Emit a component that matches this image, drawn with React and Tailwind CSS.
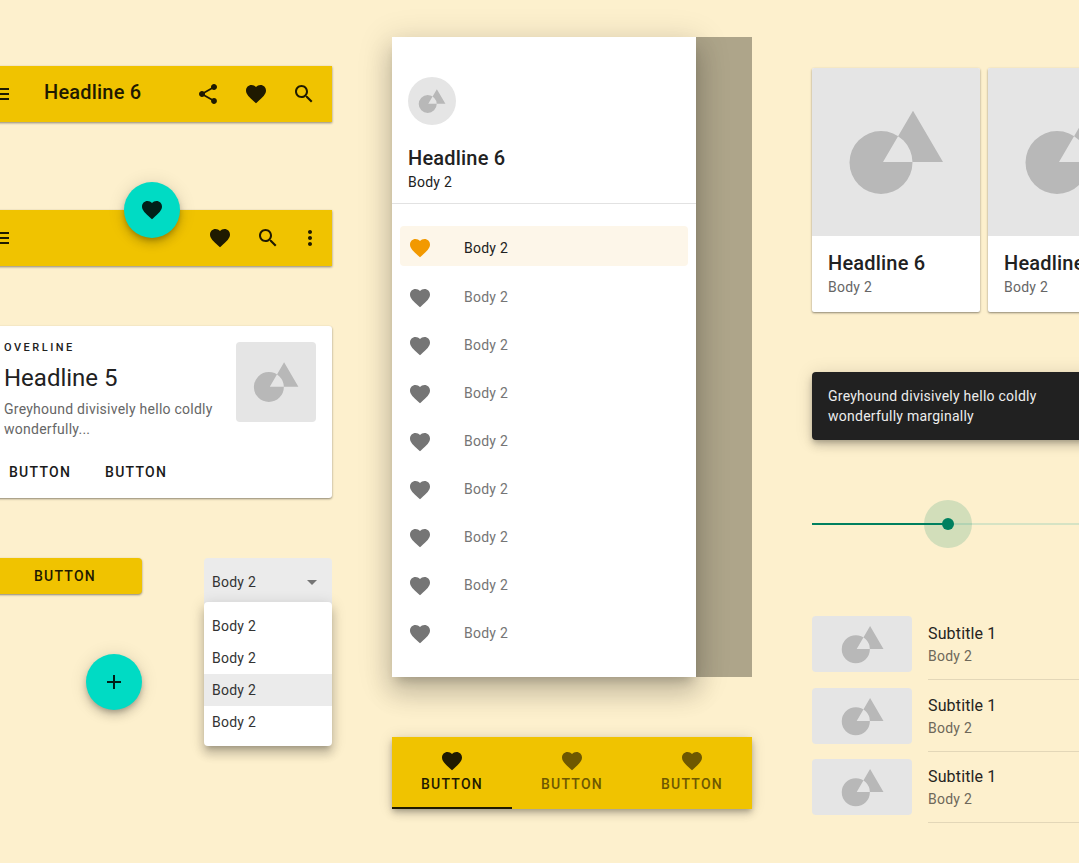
import React from 'react'

const paths = {
  heart: 'M12 21.35l-1.45-1.32C5.4 15.36 2 12.28 2 8.5 2 5.42 4.42 3 7.5 3c1.74 0 3.41.81 4.5 2.09C13.09 3.81 14.76 3 16.5 3 19.58 3 22 5.42 22 8.5c0 3.78-3.4 6.86-8.55 11.54L12 21.35z',
  share: 'M18 16.08c-.76 0-1.44.3-1.96.77L8.91 12.7c.05-.23.09-.46.09-.7s-.04-.47-.09-.7l7.05-4.11c.54.5 1.25.81 2.04.81 1.66 0 3-1.34 3-3s-1.34-3-3-3-3 1.34-3 3c0 .24.04.47.09.7L8.04 9.81C7.5 9.31 6.79 9 6 9c-1.66 0-3 1.34-3 3s1.34 3 3 3c.79 0 1.5-.31 2.04-.81l7.12 4.16c-.05.21-.08.43-.08.65 0 1.61 1.31 2.92 2.92 2.92 1.61 0 2.92-1.31 2.92-2.92s-1.31-2.92-2.92-2.92z',
  search: 'M15.5 14h-.79l-.28-.27C15.41 12.59 16 11.11 16 9.5 16 5.91 13.09 3 9.5 3S3 5.91 3 9.5 5.91 16 9.5 16c1.61 0 3.09-.59 4.23-1.57l.27.28v.79l5 4.99L20.49 19l-4.99-5zm-6 0C7.01 14 5 11.99 5 9.5S7.01 5 9.5 5 14 7.01 14 9.5 11.99 14 9.5 14z',
  more: 'M12 8c1.1 0 2-.9 2-2s-.9-2-2-2-2 .9-2 2 .9 2 2 2zm0 2c-1.1 0-2 .9-2 2s.9 2 2 2 2-.9 2-2-.9-2-2-2zm0 6c-1.1 0-2 .9-2 2s.9 2 2 2 2-.9 2-2-.9-2-2-2z',
  menu: 'M3 18h18v-2H3v2zm0-5h18v-2H3v2zm0-7v2h18V6H3z',
  add: 'M19 13h-6v6h-2v-6H5v-2h6V5h2v6h6v2z',
}

function Icon({ name, className = '' }) {
  return (
    <svg className={`w-6 h-6 shrink-0 fill-current ${className}`} viewBox="0 0 24 24">
      <path d={paths[name]} />
    </svg>
  )
}

// circle and triangle, the overlap is knocked out
function Placeholder({ className = '' }) {
  return (
    <svg className={`shrink-0 ${className}`} viewBox="0 0 168 168">
      <path
        fill="#b8b8b8"
        fillRule="evenodd"
        d="M69 63a31.5 31.5 0 1 0 0 63a31.5 31.5 0 1 0 0-63z M71 94L101 42.7L131 94z"
      />
    </svg>
  )
}

function AppBar({ children }) {
  return (
    <div className="relative h-14 flex items-center pl-4 pr-4 bg-[#f0c300] text-[#1f1a00] shadow-[0_1px_2px_rgba(0,0,0,0.35),0_1px_3px_rgba(0,0,0,0.12)]">
      {children}
    </div>
  )
}

function LeftColumn() {
  return (
    <div className="w-[360px] shrink-0 ml-[-28px] pt-[66px]">
      <AppBar>
        <Icon name="menu" />
        <div className="ml-8 mb-1 text-[20px] font-medium tracking-[0.2px] flex-1">Headline 6</div>
        <Icon name="share" />
        <Icon name="heart" className="ml-6" />
        <Icon name="search" className="ml-6" />
      </AppBar>

      <div className="relative mt-[88px]">
        <AppBar>
          <Icon name="menu" />
          <div className="flex-1" />
          <Icon name="heart" />
          <Icon name="search" className="ml-6" />
          <Icon name="more" className="ml-[18px] mr-[-6px]" />
        </AppBar>
        <div className="absolute left-[152px] top-[-28px] w-14 h-14 rounded-full bg-[#00dbc4] text-[#002019] flex items-center justify-center shadow-[0_3px_5px_-1px_rgba(0,0,0,0.2),0_6px_10px_0_rgba(0,0,0,0.14),0_1px_18px_0_rgba(0,0,0,0.12)]">
          <Icon name="heart" />
        </div>
      </div>

      <div className="ml-4 mt-[60px] w-[344px] h-[172px] bg-white rounded-[3px] p-4 flex flex-col shadow-[0_1px_2px_rgba(0,0,0,0.35),0_1px_3px_rgba(0,0,0,0.12)]">
        <div className="flex">
          <div className="flex-1 min-w-0">
            <div className="text-[11px] leading-[10px] mt-[1px] font-medium tracking-[2.5px] text-[#212121] uppercase">Overline</div>
            <div className="text-[24px] leading-8 mt-[9px] text-[#212121]">Headline 5</div>
            <div className="text-sm leading-5 mt-[5px] tracking-[0.25px] text-[#666666] w-[216px]">Greyhound divisively hello coldly wonderfully...</div>
          </div>
          <div className="w-20 h-20 rounded bg-[#e5e5e5] overflow-hidden">
            <Placeholder className="w-20 h-20" />
          </div>
        </div>
        <div className="flex mt-[23px] pl-[5px] gap-[34px] text-sm font-medium tracking-[1.25px] text-[#1a1a1a]">
          <span>BUTTON</span>
          <span>BUTTON</span>
        </div>
      </div>

      <div className="flex ml-4 mt-[60px]">
        <div className="w-[154px] shrink-0">
          <div className="h-9 rounded bg-[#f0c300] text-[#1f1a00] flex items-center justify-center text-sm font-medium tracking-[1.25px] shadow-[0_1px_2px_rgba(0,0,0,0.35),0_1px_3px_rgba(0,0,0,0.12)]">
            BUTTON
          </div>
          <div className="ml-auto mt-[60px] w-14 h-14 rounded-full bg-[#00dbc4] text-[#002019] flex items-center justify-center shadow-[0_3px_5px_-1px_rgba(0,0,0,0.2),0_6px_10px_0_rgba(0,0,0,0.14),0_1px_18px_0_rgba(0,0,0,0.12)]">
            <Icon name="add" />
          </div>
        </div>
        <div className="relative ml-[62px] w-32">
          <div className="h-14 pb-2 px-2 rounded-t bg-[#ebebeb] flex items-center justify-between text-sm tracking-[0.25px] text-[#333333]">
            <span>Body 2</span>
            <div className="mr-[7px] w-0 h-0 border-x-[5px] border-x-transparent border-t-[5px] border-t-[#757575]" />
          </div>
          <div className="absolute left-0 top-11 w-32 py-2 bg-white rounded text-sm tracking-[0.25px] text-[#333333] shadow-[0_5px_5px_-3px_rgba(0,0,0,0.2),0_8px_10px_1px_rgba(0,0,0,0.14),0_3px_14px_2px_rgba(0,0,0,0.12)]">
            <div className="h-8 px-2 flex items-center">Body 2</div>
            <div className="h-8 px-2 flex items-center">Body 2</div>
            <div className="h-8 px-2 flex items-center bg-[#ebebeb]">Body 2</div>
            <div className="h-8 px-2 flex items-center">Body 2</div>
          </div>
        </div>
      </div>
    </div>
  )
}

function MiddleColumn() {
  const rows = [0, 1, 2, 3, 4, 5, 6, 7]
  return (
    <div className="w-[360px] shrink-0 ml-[60px] pt-[37px]">
      <div className="flex h-[640px] bg-[#aea58a]">
        <div className="relative z-10 w-[304px] h-full bg-white shadow-[0_8px_10px_-5px_rgba(0,0,0,0.2),0_16px_24px_2px_rgba(0,0,0,0.14),0_6px_30px_5px_rgba(0,0,0,0.12)]">
          <div className="h-[167px] border-b border-[#e2e2e2] px-4 pt-10">
            <div className="w-12 h-12 rounded-full bg-[#e5e5e5] overflow-hidden">
              <Placeholder className="w-12 h-12" />
            </div>
            <div className="mt-[17px] text-[20px] leading-8 font-medium tracking-[0.2px] text-[#212121]">Headline 6</div>
            <div className="mt-[-2px] text-sm leading-5 tracking-[0.25px] text-[#212121]">Body 2</div>
          </div>
          <div className="mx-2 mt-[22px] h-10 pt-1 px-2 rounded bg-[#fdf6e9] flex items-center text-sm tracking-[0.25px] text-[#212121]">
            <Icon name="heart" className="text-[#f29900]" />
            <span className="ml-8">Body 2</span>
          </div>
          <div className="mt-[7px] mx-2">
            {rows.map(r => (
              <div key={r} className="h-12 px-2 flex items-center text-sm tracking-[0.25px] text-[#757575]">
                <Icon name="heart" className="mt-[2px]" />
                <span className="ml-8">Body 2</span>
              </div>
            ))}
          </div>
        </div>
      </div>

      <div className="mt-[60px] h-[72px] flex bg-[#f0c300] shadow-[0_3px_5px_-1px_rgba(0,0,0,0.2),0_5px_8px_0_rgba(0,0,0,0.14),0_1px_14px_0_rgba(0,0,0,0.12)]">
        <div className="w-[120px] pt-3 flex flex-col items-center border-b-2 border-[#1f1a00] text-[#1f1a00]">
          <Icon name="heart" />
          <span className="mt-[1px] text-sm leading-5 font-medium tracking-[1.25px]">BUTTON</span>
        </div>
        <div className="w-[120px] pt-3 flex flex-col items-center text-[#6e5800]">
          <Icon name="heart" />
          <span className="mt-[1px] text-sm leading-5 font-medium tracking-[1.25px]">BUTTON</span>
        </div>
        <div className="w-[120px] pt-3 flex flex-col items-center text-[#6e5800]">
          <Icon name="heart" />
          <span className="mt-[1px] text-sm leading-5 font-medium tracking-[1.25px]">BUTTON</span>
        </div>
      </div>
    </div>
  )
}

function ImageCard() {
  return (
    <div className="w-[168px] h-[244px] shrink-0 bg-white rounded-[2px] overflow-hidden shadow-[0_1px_2px_rgba(0,0,0,0.35),0_1px_3px_rgba(0,0,0,0.12)]">
      <div className="h-[168px] bg-[#e5e5e5]">
        <Placeholder className="w-[168px] h-[168px]" />
      </div>
      <div className="px-4 pt-[11px]">
        <div className="text-[20px] leading-8 font-medium tracking-[0.2px] text-[#212121] whitespace-nowrap">Headline 6</div>
        <div className="text-sm leading-5 mt-[-2px] tracking-[0.25px] text-[#666666]">Body 2</div>
      </div>
    </div>
  )
}

function ListRow({ className = '' }) {
  return (
    <div className={`flex ${className}`}>
      <div className="w-[100px] h-14 shrink-0 rounded bg-[#e5e5e5] overflow-hidden flex items-center justify-center">
        <Placeholder className="w-[75px] h-[75px]" />
      </div>
      <div className="ml-4 w-[300px] h-16 border-b border-black/10">
        <div className="text-base leading-6 mt-[6px] tracking-[0.15px] text-[#26241e]">Subtitle 1</div>
        <div className="text-sm leading-5 tracking-[0.25px] text-[#6e685a]">Body 2</div>
      </div>
    </div>
  )
}

function RightColumn() {
  return (
    <div className="w-[360px] shrink-0 ml-[60px] pt-[68px]">
      <div className="flex gap-2">
        <ImageCard />
        <ImageCard />
      </div>

      <div className="mt-[60px] w-[344px] h-[68px] rounded bg-[#212121] px-4 py-[14px] text-sm leading-5 tracking-[0.25px] text-[#ededed] shadow-[0_3px_5px_-1px_rgba(0,0,0,0.2),0_6px_10px_0_rgba(0,0,0,0.14),0_1px_18px_0_rgba(0,0,0,0.12)]">
        <div className="w-[230px]">Greyhound divisively hello coldly wonderfully marginally</div>
      </div>

      <div className="relative mt-[60px] h-12 flex items-center">
        <div className="w-[136px] h-0.5 bg-[#00805f]" />
        <div className="flex-1 h-0.5 bg-[#d6e3c4]" />
        <div className="absolute left-[112px] top-0 w-12 h-12 rounded-full bg-[#00805f]/[.17] flex items-center justify-center">
          <div className="w-3 h-3 rounded-full bg-[#00805f]" />
        </div>
      </div>

      <div className="mt-[68px]">
        <ListRow />
        <ListRow className="mt-2" />
        <ListRow className="mt-[7px]" />
      </div>
    </div>
  )
}

export default function App() {
  return (
    <div className="w-[1079px] h-[863px] overflow-hidden flex bg-[#fdf0cd] font-['Roboto',sans-serif]">
      <LeftColumn />
      <MiddleColumn />
      <RightColumn />
    </div>
  )
}
